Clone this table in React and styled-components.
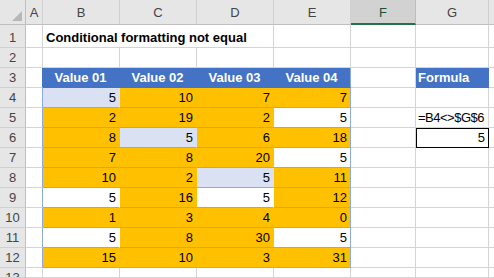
import styled, { createGlobalStyle } from 'styled-components';

// colours taken from the Excel table style
const ORANGE = '#ffc000';
const BAND = '#d9e1f2';
const BLUE = '#4472c4';
const RULE = '#8ea9db';
const GRID = '#d4d4d4';

const GlobalStyle = createGlobalStyle`
  html, body { margin: 0; padding: 0; background: #fff; overflow: hidden; }
  body { font-family: "Liberation Sans", Arial, sans-serif; }
`;

const Sheet = styled.div`
  display: grid;
  grid-template-columns: 26px 17px repeat(4, 77px) 65px 73px 1fr;
  grid-template-rows: 25px 23px repeat(11, 20px) 1fr;
  width: 494px;
  height: 278px;
  font-size: 13px;
  color: #000;
`;

const Corner = styled.div`
  box-sizing: border-box;
  background: #e6e6e6;
  border-right: 1px solid #bfbfbf;
  border-bottom: 1px solid #bfbfbf;
  display: flex;
  align-items: flex-end;
  justify-content: flex-end;
  padding: 0 3px 3px 0;
`;

const ColHead = styled.div`
  box-sizing: border-box;
  background: ${p => (p.$active ? '#d2d2d2' : '#e6e6e6')};
  color: ${p => (p.$active ? '#1e4e33' : '#444')};
  border-right: 1px solid ${p => (p.$active ? '#bdbdbd' : '#d0d0d0')};
  border-bottom: ${p => (p.$active ? '2px solid #217346' : '1px solid #bfbfbf')};
  display: flex;
  align-items: center;
  justify-content: center;
  padding-top: 1px;
`;

const RowHead = styled.div`
  box-sizing: border-box;
  background: #e6e6e6;
  color: #444;
  border-right: 1px solid #bfbfbf;
  border-bottom: 1px solid #d0d0d0;
  display: flex;
  align-items: ${p => (p.$top ? 'flex-start' : 'flex-end')};
  justify-content: center;
  padding: ${p => (p.$top ? '2px 0 0' : '0 0 2px')};
  line-height: 15px;
  overflow: hidden;
`;

const Cell = styled.div`
  box-sizing: border-box;
  display: flex;
  align-items: flex-end;
  justify-content: ${p => (p.$align === 'right' ? 'flex-end' : p.$align === 'center' ? 'center' : 'flex-start')};
  padding: 0 3px 2px 2px;
  background: ${p => p.$fill || '#fff'};
  border-right: 1px solid ${p => p.$edge || GRID};
  border-bottom: 1px solid ${p => p.$line || GRID};
  white-space: nowrap;
  line-height: 15px;
`;

const Title = styled(Cell)`
  grid-column: span 3;
  font-weight: bold;
  padding-left: 3px;
`;

const TableHead = styled(Cell)`
  background: ${BLUE};
  color: #fff;
  font-weight: bold;
`;

const FormulaText = styled(Cell)`
  letter-spacing: -0.5px;
`;

const InputCell = styled(Cell)`
  outline: 1px solid #000;
  outline-offset: -1px;
  position: relative;
  z-index: 1;
`;

const rows = [
  [5, 10, 7, 7],
  [2, 19, 2, 5],
  [8, 5, 6, 18],
  [7, 8, 20, 5],
  [10, 2, 5, 11],
  [5, 16, 5, 12],
  [1, 3, 4, 0],
  [5, 8, 30, 5],
  [15, 10, 3, 31],
];

const letters = ['A', 'B', 'C', 'D', 'E', 'F', 'G', ''];

function fillFor(value, index) {
  if (value !== 5) return ORANGE;
  return index % 2 === 0 ? BAND : '#fff';
}

function Blank({ edge }) {
  return <Cell $edge={edge} />;
}

export default function App() {
  return (
    <>
      <GlobalStyle />
      <Sheet>
        <Corner>
          <svg width="10" height="10" viewBox="0 0 10 10">
            <polygon points="10,0 10,10 0,10" fill="#b7b7b7" />
          </svg>
        </Corner>
        {letters.map((l, i) => (
          <ColHead key={i} $active={l === 'F'}>{l}</ColHead>
        ))}

        <RowHead>1</RowHead>
        <Blank />
        <Title>Conditional formatting not equal</Title>
        <Blank />
        <Blank />
        <Blank />
        <Blank />

        <RowHead>2</RowHead>
        {[0, 1, 2, 3, 4, 5, 6, 7].map(i => <Blank key={i} />)}

        <RowHead>3</RowHead>
        <Blank edge={BLUE} />
        {['Value 01', 'Value 02', 'Value 03', 'Value 04'].map((h, i) => (
          <TableHead key={h} $align="center" $edge={i === 3 ? RULE : BLUE} $line={BLUE}>{h}</TableHead>
        ))}
        <Blank />
        <TableHead $edge={BLUE} $line={BLUE}>Formula</TableHead>
        <Blank />

        {rows.map((r, ri) => (
          <div key={ri} style={{ display: 'contents' }}>
            <RowHead>{ri + 4}</RowHead>
            <Blank edge={RULE} />
            {r.map((v, ci) => {
              const fill = fillFor(v, ri);
              return (
                <Cell key={ci} $align="right" $fill={fill} $edge={ci === 3 ? RULE : fill} $line={RULE}>
                  {v}
                </Cell>
              );
            })}
            <Blank />
            {ri === 1 ? (
              <FormulaText>=B4&lt;&gt;$G$6</FormulaText>
            ) : ri === 2 ? (
              <InputCell $align="right">5</InputCell>
            ) : (
              <Blank />
            )}
            <Blank />
          </div>
        ))}

        <RowHead $top>13</RowHead>
        {[0, 1, 2, 3, 4, 5, 6, 7].map(i => <Blank key={i} />)}
      </Sheet>
    </>
  );
}
